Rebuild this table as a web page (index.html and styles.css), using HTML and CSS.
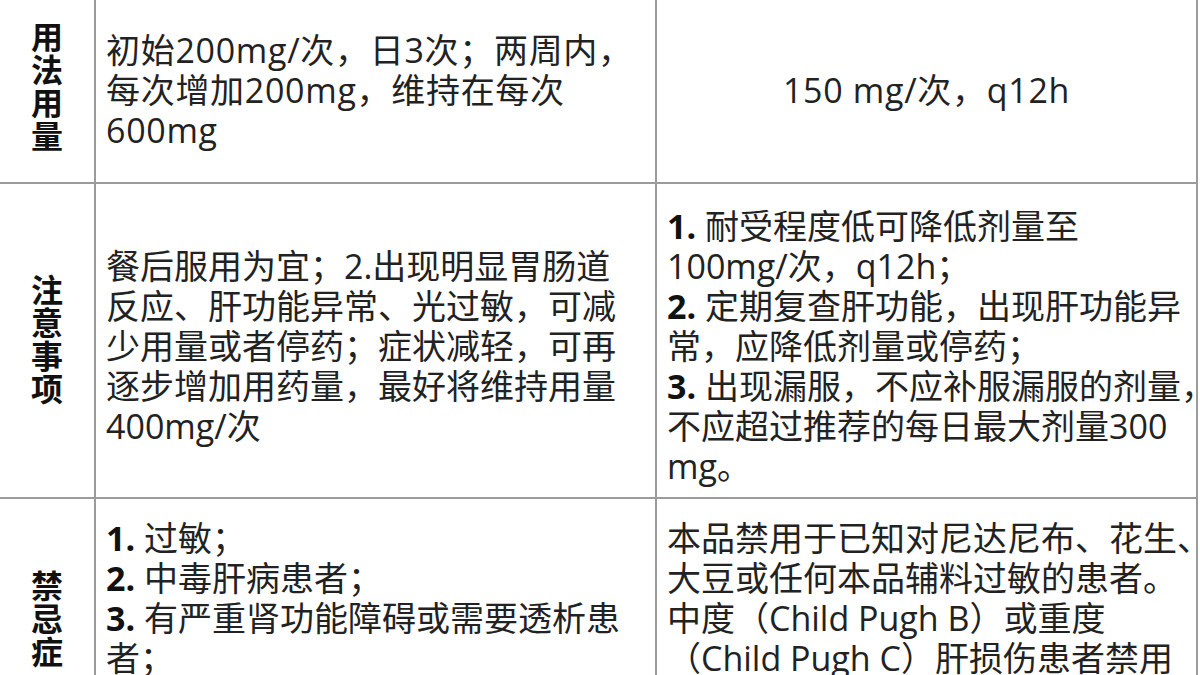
FILE: index.html
```html
<!DOCTYPE html>
<html lang="zh-CN">
<head>
<meta charset="utf-8">
<title>用法用量</title>
<link rel="stylesheet" href="styles.css">
</head>
<body>
<table class="grid">
  <colgroup><col class="c1"><col class="c2"><col class="c3"></colgroup>
  <tr class="r1">
    <th class="hd">用<br>法<br>用<br>量</th>
    <td class="tx">初始200mg/次，日3次；两周内，<br>每次增加200mg，维持在每次<br>600mg</td>
    <td class="tx ctr">150 mg/次，q12h</td>
  </tr>
  <tr class="r2">
    <th class="hd">注<br>意<br>事<br>项</th>
    <td class="tx">餐后服用为宜；2.出现明显胃肠道<br>反应、肝功能异常、光过敏，可减<br>少用量或者停药；症状减轻，可再<br>逐步增加用药量，最好将维持用量<br>400mg/次</td>
    <td class="tx"><b class="n">1.</b> 耐受程度低可降低剂量至<br>100mg/次，q12h；<br><b class="n">2.</b> 定期复查肝功能，出现肝功能异<br>常，应降低剂量或停药；<br><b class="n">3.</b> 出现漏服，不应补服漏服的剂量，<br>不应超过推荐的每日最大剂量300<br>mg。</td>
  </tr>
  <tr class="r3">
    <th class="hd">禁<br>忌<br>症</th>
    <td class="tx top"><b class="n">1.</b> 过敏；<br><b class="n">2.</b> 中毒肝病患者；<br><b class="n">3.</b> 有严重肾功能障碍或需要透析患<br>者；</td>
    <td class="tx top">本品禁用于已知对尼达尼布、花生、<br>大豆或任何本品辅料过敏的患者。<br>中度（Child Pugh B）或重度<br>（Child Pugh C）肝损伤患者禁用</td>
  </tr>
</table>
</body>
</html>
```

FILE: styles.css
```css
html, body {
  margin: 0;
  padding: 0;
  background: #ffffff;
}
body {
  width: 1200px;
  height: 675px;
  overflow: hidden;
}
.grid {
  border-collapse: separate;
  border-spacing: 0;
  table-layout: fixed;
  width: 1198px;
  margin-top: -8px;
  font-family: "Open Sans", "Noto Sans CJK SC", sans-serif;
  font-size: 34px;
  line-height: 40px;
  color: #222222;
}
.c1 { width: 96px; }
.c2 { width: 561px; }
.c3 { width: 541px; }
.grid th,
.grid td {
  box-sizing: border-box;
  border-right: 2px solid #9b9b9b;
  border-bottom: 2px solid #9b9b9b;
  padding: 19px 10px 9px;
  vertical-align: middle;
  white-space: nowrap;
  text-align: left;
  overflow: visible;
}
.r1 { height: 192px; }
.r2 { height: 315px; }
.r3 { height: 228px; }
.r1 .tx {
  letter-spacing: 0.7px;
  padding-bottom: 13px;
}
.grid .hd {
  font-family: "Noto Sans CJK SC", sans-serif;
  font-weight: 700;
  font-size: 32px;
  line-height: 33px;
  color: #111111;
  text-align: center;
  padding: 19px 0 9px;
}
.r1 .hd,
.r2 .hd {
  padding: 14px 0 19px;
}
.grid .ctr { text-align: center; }
.grid .top { vertical-align: top; }
.n {
  font-weight: 700;
  color: #111111;
}
```
